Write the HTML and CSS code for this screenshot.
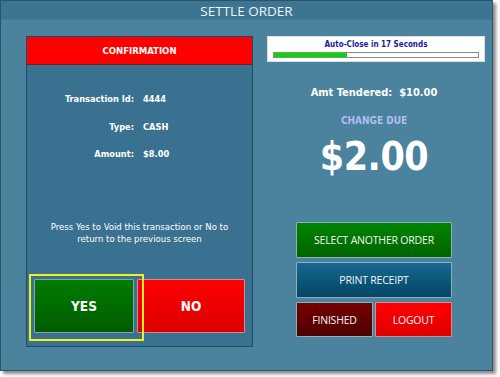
FILE: index.html
```html
<!DOCTYPE html>
<html>
<head>
<meta charset="utf-8">
<link rel="stylesheet" href="styles.css">
</head>
<body>
<div class="window">
  <div class="titlebar">SETTLE ORDER</div>
  <div class="content">
    <div class="panel">
      <div class="panel-head">CONFIRMATION</div>
      <div class="details">
        <span class="label">Transaction Id:</span><span class="value">4444</span>
        <span class="label">Type:</span><span class="value">CASH</span>
        <span class="label">Amount:</span><span class="value">$8.00</span>
      </div>
      <p class="msg">Press Yes to Void this transaction or No to<br>return to the previous screen</p>
      <div class="choices">
        <button class="btn-yes"><span class="focus"></span>YES</button>
        <button class="btn-no">NO</button>
      </div>
    </div>
    <div class="side">
      <div class="autoclose">
        <div class="ac-text">Auto-Close in 17 Seconds</div>
        <div class="ac-bar"><div class="ac-fill" style="width:36%"></div></div>
      </div>
      <div class="summary">
        <div class="tendered">Amt Tendered:&nbsp; $10.00</div>
        <div class="due-label">CHANGE DUE</div>
        <div class="due">$2.00</div>
        <div class="actions">
          <button class="act act-green">SELECT ANOTHER ORDER</button>
          <button class="act act-blue">PRINT RECEIPT</button>
          <div class="act-row">
            <button class="act act-dark">FINISHED</button>
            <button class="act act-red">LOGOUT</button>
          </div>
        </div>
      </div>
    </div>
  </div>
</div>
</body>
</html>
```
FILE: styles.css
```css
* { box-sizing: border-box; }
html, body { margin: 0; padding: 0; background: #ffffff; }
body { width: 500px; height: 377px; overflow: hidden; }

.window {
  width: 493px;
  height: 371px;
  background: #4b829e;
  border: 1px solid #2c5366;
  box-shadow: 3px 3px 3px rgba(0,0,0,0.45);
  font-family: "DejaVu Sans Condensed", "DejaVu Sans", sans-serif;
  color: #ffffff;
  display: flex;
  flex-direction: column;
}

.titlebar {
  height: 19px;
  background: #3c7492;
  color: #eef4f7;
  font-family: "Open Sans", sans-serif;
  font-size: 13.5px;
  line-height: 21px;
  text-align: center;
  border-bottom: 1px solid #44799a;
}

.content {
  display: flex;
  padding: 16px 0 0 25px;
}

.panel {
  width: 227px;
  height: 311px;
  background: #3a7190;
  border: 1px solid #1e4b62;
  display: flex;
  flex-direction: column;
}

.panel-head {
  height: 28px;
  background: #ff0000;
  border-bottom: 1px solid #6a2020;
  text-align: center;
  font-weight: bold;
  font-size: 9.5px;
  line-height: 28px;
}

.details {
  display: grid;
  grid-template-columns: 107px auto;
  column-gap: 9px;
  row-gap: 15.5px;
  margin-top: 28px;
  font-size: 9.2px;
  font-weight: bold;
  line-height: 12px;
}
.label { text-align: right; }

.msg {
  margin: auto 0 34px 0;
  text-align: center;
  font-size: 9.5px;
  line-height: 12px;
}

.choices {
  display: flex;
  gap: 3px;
  padding: 0 6px 0 7px;
  margin-bottom: 13px;
}
.choices button {
  height: 54px;
  border: 1px solid #8aa6aa;
  border-radius: 1px;
  color: #ffffff;
  font-family: "DejaVu Sans Condensed", "DejaVu Sans", sans-serif;
  font-weight: bold;
  font-size: 13.5px;
  padding: 0;
}
.btn-yes {
  position: relative;
  width: 100px;
  background: linear-gradient(#007c00, #005c00);
}
.btn-no {
  width: 108px;
  background: linear-gradient(#ff0000, #dc0000);
  border-color: #c89090 !important;
}
.focus {
  position: absolute;
  left: -6px;
  top: -6px;
  right: -11px;
  bottom: -9px;
  border: 2px solid #f0f020;
}

.side {
  margin-left: 14px;
  width: 218px;
}

.autoclose {
  height: 26px;
  background: #ffffff;
  border: 1px solid #d8e0e4;
  padding: 3px 5px 0 5px;
}
.ac-text {
  color: #1c1c9c;
  font-size: 8px;
  font-weight: bold;
  text-align: center;
  line-height: 10px;
}
.ac-bar {
  margin-top: 2px;
  height: 6px;
  border: 1px solid #8c8c8c;
  background: #ffffff;
}
.ac-fill {
  height: 100%;
  background: #00dc00;
}

.summary {
  width: 156px;
  margin-left: 29px;
  text-align: center;
}
.tendered {
  margin-top: 24px;
  font-size: 11px;
  font-weight: bold;
  line-height: 14px;
}
.due-label {
  margin-top: 15px;
  color: #b0bdf2;
  font-size: 10px;
  font-weight: bold;
  line-height: 12px;
}
.due {
  margin-top: 10px;
  font-size: 39px;
  font-weight: bold;
  line-height: 40px;
  letter-spacing: -0.5px;
}

.actions {
  margin-top: 45px;
  display: flex;
  flex-direction: column;
  gap: 4px;
}
.act-row {
  display: flex;
  gap: 2px;
}
.act {
  height: 36px;
  width: 100%;
  border: 1px solid #8ab0b8;
  border-radius: 1px;
  color: #f2f6f8;
  font-family: "Open Sans", sans-serif;
  font-size: 10.5px;
  letter-spacing: -0.2px;
  padding: 0;
}
.act-row .act { width: 77px; height: 35px; }
.act-green { background: linear-gradient(#008400, #006400); }
.act-blue { background: linear-gradient(#16698e, #034567); }
.act-dark { background: linear-gradient(#760000, #4e0000); }
.act-red { background: linear-gradient(#ff0000, #e00000); border-color: #d09090; }
```
